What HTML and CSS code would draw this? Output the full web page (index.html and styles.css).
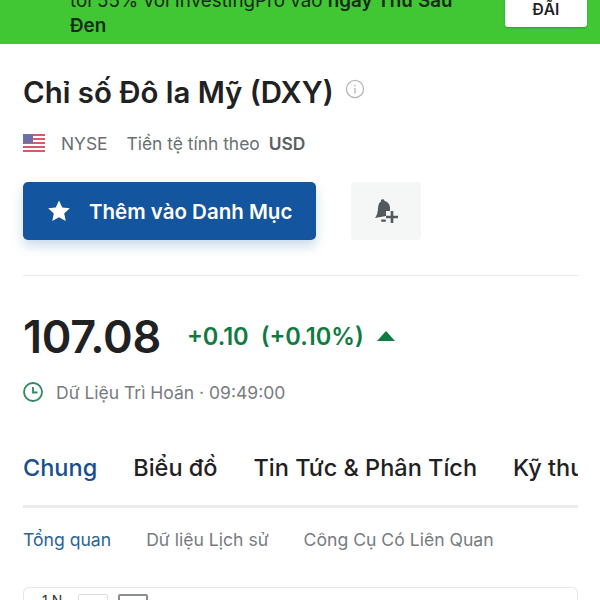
FILE: index.html
```html
<!DOCTYPE html>
<html lang="vi">
<head>
<meta charset="utf-8">
<title>Chỉ số Đô la Mỹ (DXY)</title>
<link rel="stylesheet" href="styles.css">
</head>
<body>
<div class="banner">
  <p class="banner-text">tới 55% với InvestingPro vào <b>ngày Thứ Sáu Đen</b></p>
  <div class="banner-btn">ĐÃI</div>
</div>
<main class="page">
  <div class="title-row">
    <h1 class="title">Chỉ số Đô la Mỹ (DXY)</h1>
    <svg class="info" viewBox="0 0 20 20" width="20" height="20"><circle cx="10" cy="10" r="8.6" fill="none" stroke="#b5b8bb" stroke-width="1.3"/><rect x="9.3" y="9" width="1.4" height="5.5" fill="#b5b8bb"/><rect x="9.3" y="5.8" width="1.4" height="1.6" fill="#b5b8bb"/></svg>
  </div>
  <div class="meta">
    <svg class="flag" viewBox="0 0 22 18" width="22" height="18"><rect width="22" height="18" fill="#fff"/><g fill="#d9596b"><rect y="0" width="22" height="2"/><rect y="4" width="22" height="2"/><rect y="8" width="22" height="2"/><rect y="12" width="22" height="2"/><rect y="16" width="22" height="2"/></g><rect width="10" height="9" fill="#6f6fa8"/></svg>
    <span class="exchange">NYSE</span>
    <span>Tiền tệ tính theo</span>
    <b class="currency">USD</b>
  </div>
  <div class="actions">
    <button class="watch-btn">
      <svg viewBox="0 0 24 24" width="26" height="26"><path d="M12 2.2l3 6.5 7 .8-5.200 4.800 1.400 7L12 17.800 5.800 21.300l1.400-7L2 9.500l7-.8z" fill="#fff"/></svg>
      <span>Thêm vào Danh Mục</span>
    </button>
    <button class="alert-btn" aria-label="Thêm cảnh báo">
      <svg viewBox="0 0 28 28" width="28" height="28"><path d="M9 3C10 1.500 12.500 2 12.500 4 15.500 4.500 18 7 18 11L18 14 14 14 14 19 3 21C5 18 5.500 16 6 12 6 8 7 5.500 9 4.500z" fill="#53585c"/><rect x="9" y="22.500" width="5" height="2.200" rx="1" fill="#53585c"/><path d="M18.700 14h2.600v4.700H26v2.600h-4.700V26h-2.600v-4.700H14v-2.600h4.700z" fill="#53585c"/></svg>
    </button>
  </div>
  <hr class="rule">
  <div class="quote">
    <span class="price">107.08</span>
    <span class="change">+0.10</span>
    <span class="change pct">(+0.10%)</span>
    <span class="arrow"></span>
  </div>
  <div class="delay">
    <svg viewBox="0 0 20 20" width="20" height="20"><circle cx="10" cy="10" r="9" fill="none" stroke="#2f8a5e" stroke-width="1.800"/><path d="M10 5v5.500h4.500" fill="none" stroke="#2f8a5e" stroke-width="1.800"/></svg>
    <span>Dữ Liệu Trì Hoãn · 09:49:00</span>
  </div>
  <nav class="tabs">
    <a class="tab active">Chung</a>
    <a class="tab">Biểu đồ</a>
    <a class="tab">Tin Tức &amp; Phân Tích</a>
    <a class="tab">Kỹ thuật</a>
  </nav>
  <nav class="subtabs">
    <a class="subtab active">Tổng quan</a>
    <a class="subtab">Dữ liệu Lịch sử</a>
    <a class="subtab">Công Cụ Có Liên Quan</a>
  </nav>
  <section class="chart">
    <span class="chart-label">1 N</span>
    <span class="chart-box"></span>
    <span class="chart-box dark"></span>
  </section>
</main>
</body>
</html>
```
FILE: styles.css
```css
* { box-sizing: border-box; }
html, body { margin: 0; height: 600px; overflow: hidden; background: #fff; }
body { font-family: Inter, "Noto Sans", sans-serif; color: #1f2123; }

.banner {
  height: 44px;
  background: #41c634;
  display: flex;
  align-items: flex-end;
  justify-content: space-between;
  padding: 0 13px 6px 70px;
  overflow: hidden;
}
.banner-text {
  margin: 0;
  width: 400px;
  font-size: 18.800px;
  line-height: 25px;
  color: #1a2a1a;
}
.banner-text b { font-weight: 600; }
.banner-btn {
  width: 82px;
  height: 50px;
  margin-bottom: 11px;
  flex: none;
  background: #fff;
  border-radius: 3px;
  box-shadow: 0 1px 2px rgba(0,0,0,.2);
  display: flex;
  align-items: flex-end;
  justify-content: center;
  padding-bottom: 8px;
  font-size: 15.500px;
  font-weight: 600;
}

.page { padding: 0 22px 0 23px; }

.title-row { display: flex; align-items: flex-start; gap: 11px; margin-top: 31px; }
.title { margin: 0; font-size: 29.400px; line-height: 36px; font-weight: 600; white-space: nowrap; }
.info { margin-top: 4px; }

.meta {
  display: flex;
  align-items: center;
  margin-top: 21px;
  height: 22px;
  font-size: 17.400px;
  color: #6a6f73;
}
.exchange { margin-left: 16px; margin-right: 19px; }
.currency { margin-left: 9px; font-weight: 600; color: #5b6064; }

.actions { display: flex; gap: 35px; margin-top: 28px; }
.watch-btn {
  width: 293px;
  height: 58px;
  border: 0;
  border-radius: 5px;
  background: #13559f;
  color: #fff;
  display: flex;
  align-items: center;
  gap: 17px;
  padding: 0 0 0 23px;
  font: 600 20.500px Inter, sans-serif;
  box-shadow: 0 6px 12px rgba(19,85,159,.22);
}
.alert-btn {
  width: 70px;
  height: 58px;
  border: 0;
  border-radius: 4px;
  background: #f5f6f6;
  display: flex;
  align-items: center;
  justify-content: center;
  padding: 0;
}

.rule { margin: 35px 0 0; border: 0; border-top: 1px solid #e8eaeb; }

.quote { display: flex; align-items: center; margin-top: 34px; height: 52px; }
.price { font-size: 45px; font-weight: 600; letter-spacing: -.3px; margin-right: 26px; }
.change { font-size: 23.600px; font-weight: 600; color: #0f7a42; }
.pct { margin-left: 12px; }
.arrow {
  margin-left: 13px;
  width: 0;
  height: 0;
  border-left: 9px solid transparent;
  border-right: 9px solid transparent;
  border-bottom: 10px solid #0f7a42;
}

.delay {
  display: flex;
  align-items: center;
  gap: 13px;
  margin-top: 18px;
  height: 24px;
  font-size: 17.500px;
  color: #777b7f;
}

.tabs {
  display: flex;
  gap: 36px;
  margin-top: 48px;
  width: 555px;
  overflow: hidden;
  border-bottom: 3px solid #e9ebec;
  white-space: nowrap;
}
.tab {
  font-size: 23.500px;
  line-height: 32px;
  font-weight: 500;
  padding-bottom: 21px;
  margin-bottom: -3px;
  border-bottom: 3px solid transparent;
  color: #1f2123;
}
.tab.active { color: #174f8f; border-bottom-color: #174f8f; }

.subtabs { display: flex; gap: 35px; margin-top: 19px; font-size: 17.600px; line-height: 26px; color: #777b7f; }
.subtab.active { color: #2a6396; }

.chart {
  display: flex;
  align-items: flex-start;
  height: 13px;
  margin-top: 34px;
  padding: 6px 0 0 18px;
  overflow: hidden;
  border: 1px solid #e4e6e7;
  border-bottom: 0;
  border-radius: 6px 6px 0 0;
  font-size: 14px;
}
.chart-label { color: #333; width: 36px; line-height: 14px; flex: none; }
.chart-box { width: 30px; height: 20px; flex: none; margin-right: 10px; border: 1px solid #dcdedf; border-radius: 2px; }
.chart-box.dark { border: 2px solid #8b8e90; }
```
